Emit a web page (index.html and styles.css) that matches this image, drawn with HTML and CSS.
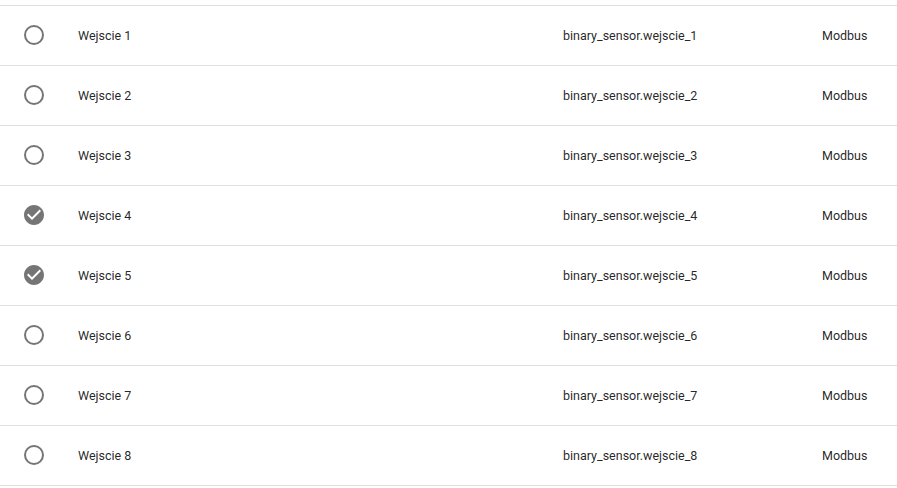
FILE: index.html
```html
<!DOCTYPE html>
<html>
<head>
<meta charset="utf-8">
<link rel="stylesheet" href="styles.css">
</head>
<body>
<div class="table">
  <div class="row"><div class="cell check"><svg viewBox="0 0 24 24"><path d="M12,20A8,8 0 0,1 4,12A8,8 0 0,1 12,4A8,8 0 0,1 20,12A8,8 0 0,1 12,20M12,2A10,10 0 0,0 2,12A10,10 0 0,0 12,22A10,10 0 0,0 22,12A10,10 0 0,0 12,2Z"/></svg></div><div class="cell name">Wejscie 1</div><div class="cell entity">binary_sensor.wejscie_1</div><div class="cell integ">Modbus</div></div>
  <div class="row"><div class="cell check"><svg viewBox="0 0 24 24"><path d="M12,20A8,8 0 0,1 4,12A8,8 0 0,1 12,4A8,8 0 0,1 20,12A8,8 0 0,1 12,20M12,2A10,10 0 0,0 2,12A10,10 0 0,0 12,22A10,10 0 0,0 22,12A10,10 0 0,0 12,2Z"/></svg></div><div class="cell name">Wejscie 2</div><div class="cell entity">binary_sensor.wejscie_2</div><div class="cell integ">Modbus</div></div>
  <div class="row"><div class="cell check"><svg viewBox="0 0 24 24"><path d="M12,20A8,8 0 0,1 4,12A8,8 0 0,1 12,4A8,8 0 0,1 20,12A8,8 0 0,1 12,20M12,2A10,10 0 0,0 2,12A10,10 0 0,0 12,22A10,10 0 0,0 22,12A10,10 0 0,0 12,2Z"/></svg></div><div class="cell name">Wejscie 3</div><div class="cell entity">binary_sensor.wejscie_3</div><div class="cell integ">Modbus</div></div>
  <div class="row"><div class="cell check"><svg viewBox="0 0 24 24"><path d="M12 2C6.5 2 2 6.5 2 12S6.5 22 12 22 22 17.5 22 12 17.5 2 12 2M10 17L5 12L6.41 10.59L10 14.17L17.59 6.58L19 8L10 17Z"/></svg></div><div class="cell name">Wejscie 4</div><div class="cell entity">binary_sensor.wejscie_4</div><div class="cell integ">Modbus</div></div>
  <div class="row"><div class="cell check"><svg viewBox="0 0 24 24"><path d="M12 2C6.5 2 2 6.5 2 12S6.5 22 12 22 22 17.5 22 12 17.5 2 12 2M10 17L5 12L6.41 10.59L10 14.17L17.59 6.58L19 8L10 17Z"/></svg></div><div class="cell name">Wejscie 5</div><div class="cell entity">binary_sensor.wejscie_5</div><div class="cell integ">Modbus</div></div>
  <div class="row"><div class="cell check"><svg viewBox="0 0 24 24"><path d="M12,20A8,8 0 0,1 4,12A8,8 0 0,1 12,4A8,8 0 0,1 20,12A8,8 0 0,1 12,20M12,2A10,10 0 0,0 2,12A10,10 0 0,0 12,22A10,10 0 0,0 22,12A10,10 0 0,0 12,2Z"/></svg></div><div class="cell name">Wejscie 6</div><div class="cell entity">binary_sensor.wejscie_6</div><div class="cell integ">Modbus</div></div>
  <div class="row"><div class="cell check"><svg viewBox="0 0 24 24"><path d="M12,20A8,8 0 0,1 4,12A8,8 0 0,1 12,4A8,8 0 0,1 20,12A8,8 0 0,1 12,20M12,2A10,10 0 0,0 2,12A10,10 0 0,0 12,22A10,10 0 0,0 22,12A10,10 0 0,0 12,2Z"/></svg></div><div class="cell name">Wejscie 7</div><div class="cell entity">binary_sensor.wejscie_7</div><div class="cell integ">Modbus</div></div>
  <div class="row"><div class="cell check"><svg viewBox="0 0 24 24"><path d="M12,20A8,8 0 0,1 4,12A8,8 0 0,1 12,4A8,8 0 0,1 20,12A8,8 0 0,1 12,20M12,2A10,10 0 0,0 2,12A10,10 0 0,0 12,22A10,10 0 0,0 22,12A10,10 0 0,0 12,2Z"/></svg></div><div class="cell name">Wejscie 8</div><div class="cell entity">binary_sensor.wejscie_8</div><div class="cell integ">Modbus</div></div>
</div>
</body>
</html>
```
FILE: styles.css
```css
html, body {
  margin: 0;
  padding: 0;
  background: #ffffff;
}
body {
  font-family: Roboto, "Liberation Sans", sans-serif;
  font-size: 12.5px;
  color: rgba(0, 0, 0, 0.87);
}
.table {
  padding-top: 4.5px;
}
.row {
  display: flex;
  align-items: center;
  height: 60px;
  box-sizing: border-box;
  border-top: 1px solid #e0e0e0;
}
.row:last-child {
  height: 61px;
  border-bottom: 1px solid #e0e0e0;
}
.cell {
  white-space: nowrap;
}
.check {
  width: 78px;
  padding-left: 22px;
  box-sizing: border-box;
  display: flex;
  align-items: center;
}
.check svg {
  width: 24px;
  height: 24px;
  fill: rgba(0, 0, 0, 0.54);
  display: block;
}
.name {
  width: 485px;
}
.entity {
  width: 259px;
}
.integ {
  flex: 1;
}
```
